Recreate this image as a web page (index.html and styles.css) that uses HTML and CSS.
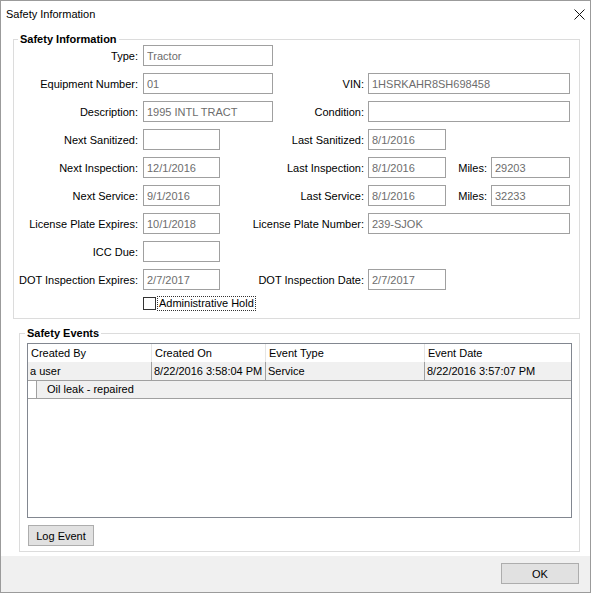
FILE: index.html
```html
<!DOCTYPE html>
<html lang="en">
<head>
    <meta charset="UTF-8">
    <title>Safety Information</title>
    <link rel="stylesheet" href="styles.css">
</head>
<body>

    <div class="window">
        <div class="titlebar">
            <span class="title">Safety Information</span>
            <svg class="close" width="11" height="11" viewBox="0 0 11 11">
                <path d="M0.5 0.5 L10.5 10.5 M10.5 0.5 L0.5 10.5" stroke="#111" stroke-width="1" fill="none"/>
            </svg>
        </div>

        <div class="body">
            <!-- Dados do equipamento -->
            <fieldset class="group group-info">
                <legend>Safety Information</legend>
                <div class="form-grid">
                    <label class="lbl">Type:</label>
                    <input class="fld wide-l" type="text" value="Tractor" readonly>

                    <label class="lbl">Equipment Number:</label>
                    <input class="fld wide-l" type="text" value="01" readonly>
                    <label class="lbl-r short">VIN:</label>
                    <input class="fld wide-r" type="text" value="1HSRKAHR8SH698458" readonly>

                    <label class="lbl">Description:</label>
                    <input class="fld wide-l" type="text" value="1995 INTL TRACT" readonly>
                    <label class="lbl-r short">Condition:</label>
                    <input class="fld wide-r" type="text" value="">

                    <label class="lbl">Next Sanitized:</label>
                    <input class="fld small-l" type="text" value="">
                    <label class="lbl-r">Last Sanitized:</label>
                    <input class="fld small-r" type="text" value="8/1/2016" readonly>

                    <label class="lbl">Next Inspection:</label>
                    <input class="fld small-l" type="text" value="12/1/2016" readonly>
                    <label class="lbl-r">Last Inspection:</label>
                    <input class="fld small-r" type="text" value="8/1/2016" readonly>
                    <label class="lbl-miles">Miles:</label>
                    <input class="fld miles" type="text" value="29203" readonly>

                    <label class="lbl">Next Service:</label>
                    <input class="fld small-l" type="text" value="9/1/2016" readonly>
                    <label class="lbl-r">Last Service:</label>
                    <input class="fld small-r" type="text" value="8/1/2016" readonly>
                    <label class="lbl-miles">Miles:</label>
                    <input class="fld miles" type="text" value="32233" readonly>

                    <label class="lbl">License Plate Expires:</label>
                    <input class="fld small-l" type="text" value="10/1/2018" readonly>
                    <label class="lbl-r">License Plate Number:</label>
                    <input class="fld wide-r" type="text" value="239-SJOK" readonly>

                    <label class="lbl">ICC Due:</label>
                    <input class="fld small-l" type="text" value="">

                    <label class="lbl">DOT Inspection Expires:</label>
                    <input class="fld small-l" type="text" value="2/7/2017" readonly>
                    <label class="lbl-r">DOT Inspection Date:</label>
                    <input class="fld small-r" type="text" value="2/7/2017" readonly>

                    <div class="check-row">
                        <span class="check-box"></span>
                        <span class="check-label">Administrative Hold</span>
                    </div>
                </div>
            </fieldset>

            <!-- Eventos -->
            <fieldset class="group group-events">
                <legend>Safety Events</legend>
                <div class="list">
                    <div class="list-head">
                        <div class="cell">Created By</div>
                        <div class="cell">Created On</div>
                        <div class="cell">Event Type</div>
                        <div class="cell">Event Date</div>
                    </div>
                    <div class="list-row">
                        <div class="cell">a user</div>
                        <div class="cell">8/22/2016 3:58:04 PM</div>
                        <div class="cell">Service</div>
                        <div class="cell">8/22/2016 3:57:07 PM</div>
                    </div>
                    <div class="list-detail">
                        <div class="detail-cell">Oil leak - repaired</div>
                    </div>
                </div>
                <button class="btn btn-log">Log Event</button>
            </fieldset>
        </div>

        <div class="footer">
            <button class="btn btn-ok">OK</button>
        </div>
    </div>

</body>
</html>
```

FILE: styles.css
```css
/* Reset básico */
* {
    margin: 0;
    padding: 0;
    box-sizing: border-box;
}

body {
    font-family: 'Liberation Sans', Arial, sans-serif;
    font-size: 11px;
    color: #000;
    background-color: #fff;
}

/* Janela */
.window {
    width: 591px;
    height: 593px;
    border: 1px solid #9b9b9b;
    display: flex;
    flex-direction: column;
    background-color: #fff;
}

.titlebar {
    height: 26px;
    display: flex;
    align-items: center;
    justify-content: space-between;
    padding: 0 5px 0 5px;
    flex-shrink: 0;
}

.title {
    font-size: 11px;
}

.close {
    display: block;
}

.body {
    flex: 1;
}

/* Grupos */
.group {
    border: 1px solid #dcdcdc;
}

.group legend {
    font-weight: bold;
    font-size: 11px;
    line-height: 12px;
    padding: 0 2px;
}

.group-info {
    margin: 6px 10px 0 12px;
}

.group-info legend {
    margin-left: 4px;
}

.group-events {
    margin: 8px 10px 0 18px;
    padding: 0 7px 5px 7px;
}

.group-events legend {
    margin-left: -2px;
}

/* Formulário */
.form-grid {
    display: grid;
    grid-template-columns: 124px 5px 77px 53px 91px 4px 78px 41px 4px 79px;
    grid-auto-rows: 21px;
    row-gap: 7px;
}

.lbl,
.lbl-r,
.lbl-miles {
    align-self: center;
    text-align: right;
    white-space: nowrap;
}

.lbl { grid-column: 1 / 2; }
.lbl-r { grid-column: 4 / 6; }
.lbl-r.short { grid-column: 5 / 6; }
.lbl-miles { grid-column: 8 / 9; }

.fld {
    height: 21px;
    width: 100%;
    border: 1px solid #a0a0a0;
    padding: 0 3px;
    font-family: 'Liberation Sans', Arial, sans-serif;
    font-size: 11px;
    color: #6d6d6d;
    background-color: #fff;
    outline: none;
}

.small-l { grid-column: 3 / 4; }
.wide-l { grid-column: 3 / 5; }
.small-r { grid-column: 7 / 8; }
.wide-r { grid-column: 7 / 11; }
.miles { grid-column: 10 / 11; }

.check-row {
    grid-column: 3 / 7;
    display: flex;
    align-items: center;
    height: 15px;
    margin-top: -1px;
}

.check-box {
    width: 13px;
    height: 13px;
    border: 1px solid #333;
    background-color: #fff;
}

.check-label {
    margin-left: 1px;
    padding: 0 1px;
    line-height: 13px;
    border: 1px dotted #333;
}

/* Lista de eventos */
.list {
    margin-top: 4px;
    height: 175px;
    border: 1px solid #828790;
    background-color: #fff;
}

.list-head,
.list-row {
    display: grid;
    grid-template-columns: 124px 114px 159px 1fr;
}

.list-head .cell {
    height: 18px;
    line-height: 18px;
    padding-left: 3px;
    border-right: 1px solid #e5e5e5;
}

.list-row {
    background-color: #f0f0f0;
    border-bottom: 1px solid #a0a0a0;
}

.list-row .cell {
    height: 18px;
    line-height: 18px;
    padding-left: 2px;
    border-right: 1px solid #a0a0a0;
}

.list-head .cell:last-child,
.list-row .cell:last-child {
    border-right: none;
}

.list-detail {
    padding-left: 8px;
    border-bottom: 1px solid #a0a0a0;
}

.detail-cell {
    height: 17px;
    line-height: 17px;
    padding-left: 10px;
    background-color: #f0f0f0;
    border-left: 1px solid #a0a0a0;
}

/* Botões */
.btn {
    height: 21px;
    font-family: 'Liberation Sans', Arial, sans-serif;
    font-size: 11px;
    color: #000;
    background-color: #e1e1e1;
    border: 1px solid #adadad;
}

.btn-log {
    width: 66px;
    margin: 7px 0 0 1px;
    display: block;
}

.btn-ok {
    width: 78px;
}

/* Rodapé */
.footer {
    height: 36px;
    flex-shrink: 0;
    background-color: #f0f0f0;
    display: flex;
    justify-content: flex-end;
    align-items: flex-start;
    padding: 7px 11px 0 0;
}
```
